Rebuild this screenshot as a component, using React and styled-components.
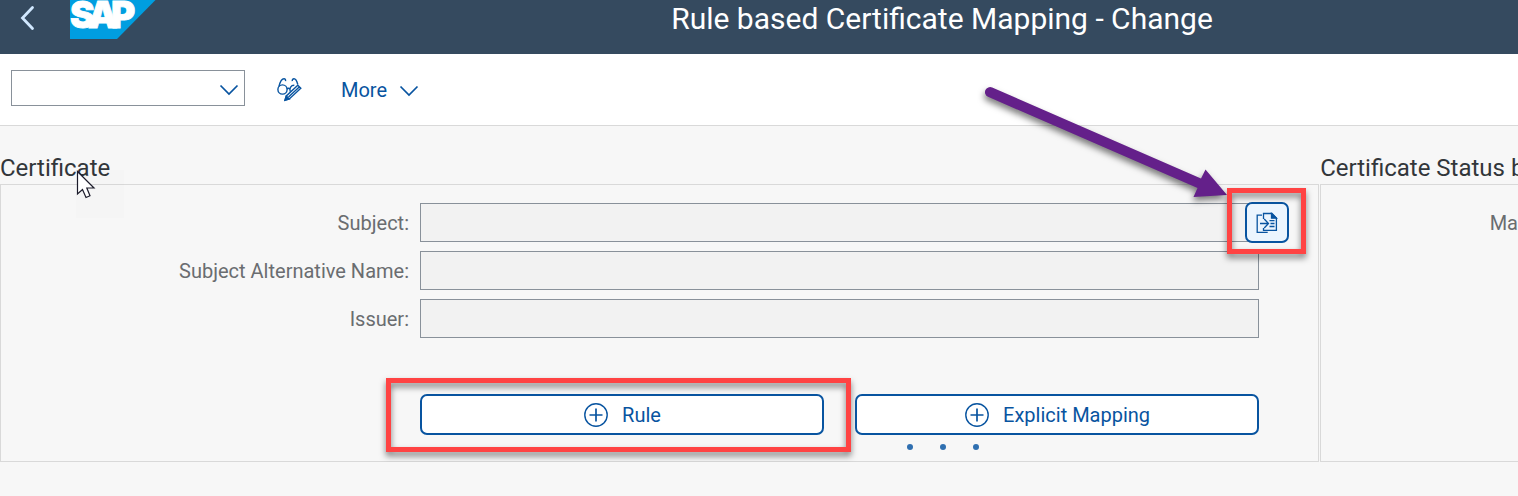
import React from "react";
import styled, { createGlobalStyle } from "styled-components";

const GlobalStyle = createGlobalStyle`
  *, *::before, *::after { box-sizing: border-box; }
  body {
    margin: 0;
    background: #f7f7f7;
    color: #32363a;
    font-family: Roboto, "Liberation Sans", sans-serif;
    font-size: 20px;
    line-height: 24px;
    overflow-x: hidden;
  }
  button, input, select { font: inherit; color: inherit; margin: 0; }
`;

const Page = styled.div`
  position: relative;
  overflow: hidden;
`;

const Header = styled.header`
  display: flex;
  height: 54px;
  background: #354a5f;
  color: #fff;
`;

const Brand = styled.div`
  flex: 0 0 366px;
  display: flex;
  align-items: flex-start;
`;

const BackButton = styled.button`
  width: 70px;
  height: 36px;
  padding: 0 0 0 20px;
  border: 0;
  background: none;
  text-align: left;

  svg { display: block; }
`;

const Title = styled.h1`
  flex: 1;
  margin: 0;
  font-size: 30px;
  line-height: 38px;
  font-weight: 400;
  text-align: center;
  white-space: nowrap;
`;

const Toolbar = styled.div`
  display: flex;
  align-items: center;
  height: 72px;
  padding: 0 11px;
  background: #fff;
  border-bottom: 1px solid #d9d9d9;
`;

const SelectBox = styled.div`
  display: grid;
  align-items: center;
  width: 234px;
  margin-bottom: 4px;

  > * { grid-area: 1 / 1; }
  > svg { justify-self: end; margin: 2px 6px 0 0; pointer-events: none; }
`;

const Select = styled.select`
  appearance: none;
  width: 100%;
  height: 36px;
  padding: 0 32px 0 8px;
  border: 1px solid #89919a;
  border-radius: 0;
  background: #fff;
`;

const ToolButton = styled.button`
  display: flex;
  align-items: center;
  gap: 12px;
  height: 36px;
  margin-left: ${(p) => p.$gap}px;
  padding: 0;
  border: 0;
  background: none;
  color: #0854a0;
`;

const Panels = styled.main`
  display: grid;
  grid-template-columns: minmax(0, 20fr) minmax(0, 3fr);
  gap: 1px;
  padding-top: 26px;
`;

const Section = styled.section`
  position: relative;
  display: flex;
  flex-direction: column;
  min-width: 0;
`;

const SectionTitle = styled.h2`
  margin: 0;
  font-size: 24px;
  line-height: 32px;
  font-weight: 400;
  white-space: nowrap;
`;

const Panel = styled.div`
  flex: 1;
  padding: 18px 59px 26px 0;
  border: 1px solid #d9d9d9;
  ${(p) => p.$open && "border-right: 0; padding-right: 0;"}
`;

const Fields = styled.div`
  display: grid;
  gap: 9px;
`;

const Row = styled.div`
  display: grid;
  grid-template-columns: 408px minmax(0, 1fr);
  column-gap: 11px;
  align-items: center;
`;

const Label = styled.label`
  color: #6a6d70;
  text-align: right;
  white-space: nowrap;
`;

const StatusLabel = styled(Label)`
  display: block;
  padding-top: 8px;
`;

const Control = styled.div`
  position: relative;
  display: flex;
`;

const TextInput = styled.input`
  width: 100%;
  height: 39px;
  padding: 0 8px;
  border: 1px solid #89919a;
  border-radius: 0;
  background: #f2f2f2;
`;

const PasteButton = styled.button`
  position: absolute;
  top: -1px;
  right: -30px;
  display: grid;
  place-items: center;
  width: 44px;
  height: 41px;
  padding: 0;
  border: 2px solid #0854a0;
  border-radius: 7px;
  background: #ebf5fe;
`;

const Actions = styled.div`
  display: grid;
  grid-template-columns: 1fr 1fr;
  gap: 31px;
  margin: 56px 0 0 419px;
`;

const ActionButton = styled.button`
  display: flex;
  flex: 1;
  align-items: center;
  justify-content: center;
  gap: 13px;
  height: 41px;
  padding: 0;
  border: 2px solid #0854a0;
  border-radius: 7px;
  background: #fff;
  color: #0854a0;
`;

const Highlight = styled.span`
  position: absolute;
  inset: ${(p) => p.$inset};
  border: 5px solid #ff4343;
  filter: drop-shadow(0 4px 3px rgba(0, 0, 0, 0.5));
  pointer-events: none;
`;

const Arrow = styled.svg`
  position: absolute;
  top: -123px;
  right: 19px;
  filter: drop-shadow(-1px 4px 3px rgba(0, 0, 0, 0.5));
  pointer-events: none;
`;

const BusyDots = styled.span`
  position: absolute;
  top: 50px;
  left: 52px;
  display: flex;
  gap: 27px;

  i {
    width: 6px;
    height: 6px;
    border-radius: 50%;
    background: #2f6fb0;
  }
`;

const Pointer = styled.div`
  position: absolute;
  top: 18px;
  left: 76px;
  width: 48px;
  height: 48px;
  background: rgba(0, 0, 0, 0.006);
  pointer-events: none;

  svg { display: block; }
`;

function Chevron() {
  return (
    <svg width="20" height="14" viewBox="0 0 20 14" fill="none" stroke="#0854a0" strokeWidth="1.7" aria-hidden="true">
      <path d="M1.5 3.5 10 12 18.5 3.5" />
    </svg>
  );
}

function SapLogo() {
  return (
    <svg width="86" height="39" viewBox="0 0 86 39" role="img" aria-label="SAP">
      <path d="M0 0H85.5L47 39H0Z" fill="#009ee0" />
      <text
        x="0 18 41"
        y="28"
        fill="#fff"
        stroke="#fff"
        strokeWidth="0.8"
        fontFamily="Inter, 'Liberation Sans', sans-serif"
        fontWeight="900"
        fontSize="37"
      >
        SAP
      </text>
    </svg>
  );
}

function DisplayChangeIcon() {
  return (
    <svg width="25" height="25" viewBox="0 0 25 25" fill="none" stroke="#0854a0" strokeWidth="1.4" aria-hidden="true">
      <circle cx="5.5" cy="12.5" r="4.6" />
      <path d="M2 9.5C2.800 6 4.500 1.800 7 1.800 8.200 1.800 8.800 2.800 8.500 4.200" />
      <path d="M10 12.200C10.800 11 12 11 12.900 12.200M13.200 14.500C12.200 11 14 8.200 17.300 8.300" />
      <path d="M15.300 4.200C15 2.800 15.800 1.800 17 1.800 19.200 1.800 20 4.500 20.800 7.500" />
      <path d="M8 23.300 9.300 19 20.800 8.200 23.800 11.200 12.300 22ZM11.500 20 22 10.200" />
      <path d="M8 23.300 9.300 19 12.300 22Z" fill="#0854a0" />
    </svg>
  );
}

function PasteIcon() {
  return (
    <svg width="22" height="22" viewBox="0 0 22 22" fill="none" stroke="#0854a0" strokeWidth="1.3" aria-hidden="true">
      <path d="M6 3.2H1.2V20.300H11.700" />
      <path d="M7.500 7V1.500H16L20.400 6V18.300H7.500V16" />
      <path d="M15.500 1.500V6.200H20.500Z" fill="#0854a0" />
      <path d="M4 11.500H12.500M8.200 7 12.500 11.500 8.200 16" />
      <path d="M13.500 8.700H18.500M14.500 11.500H18.500M13.500 14.500H18.500" />
    </svg>
  );
}

function AddIcon() {
  return (
    <svg width="26" height="26" viewBox="0 0 26 26" fill="none" stroke="#0854a0" aria-hidden="true">
      <circle cx="13" cy="13" r="11.2" strokeWidth="1.4" />
      <path d="M6.500 13H19.500M13 6.500V19.500" strokeWidth="1.7" />
    </svg>
  );
}

export default function App() {
  return (
    <Page>
      <GlobalStyle />
      <Header>
        <Brand>
          <BackButton aria-label="Back">
            <svg width="16" height="26" viewBox="0 0 16 26" fill="none" stroke="#d1e8ff" strokeWidth="2.8" strokeLinecap="round">
              <path d="M12.500 2.500 2.500 13 12.500 23.500" />
            </svg>
          </BackButton>
          <SapLogo />
        </Brand>
        <Title>Rule based Certificate Mapping - Change</Title>
      </Header>
      <Toolbar>
        <SelectBox>
          <Select aria-label="Command" defaultValue="">
            <option value="" />
          </Select>
          <Chevron />
        </SelectBox>
        <ToolButton $gap={32} aria-label="Display or change">
          <DisplayChangeIcon />
        </ToolButton>
        <ToolButton $gap={39}>
          More
          <Chevron />
        </ToolButton>
      </Toolbar>
      <Panels>
        <Section>
          <SectionTitle>Certificate</SectionTitle>
          <Panel>
            <Fields>
              <Row>
                <Label htmlFor="subject">Subject:</Label>
                <Control>
                  <TextInput id="subject" readOnly />
                  <PasteButton aria-label="Import certificate">
                    <PasteIcon />
                  </PasteButton>
                  <Arrow width="260" height="130" viewBox="0 0 260 130" aria-hidden="true">
                    <path
                      d="M12.200 7.500 221 98.500 225.500 89.500 247 115 213.500 117 217.500 108 8 16.800A5 5 0 0 1 12.200 7.500Z"
                      fill="#64208a"
                    />
                  </Arrow>
                  <Highlight $inset="-15px -47px -12px calc(100% - 32px)" />
                </Control>
              </Row>
              <Row>
                <Label htmlFor="alt-name">Subject Alternative Name:</Label>
                <TextInput id="alt-name" readOnly />
              </Row>
              <Row>
                <Label htmlFor="issuer">Issuer:</Label>
                <TextInput id="issuer" readOnly />
              </Row>
            </Fields>
            <Actions>
              <Control>
                <ActionButton>
                  <AddIcon />
                  Rule
                </ActionButton>
                <Highlight $inset="-16px -27px -17px -34px" />
              </Control>
              <Control>
                <ActionButton>
                  <AddIcon />
                  Explicit Mapping
                </ActionButton>
                <BusyDots>
                  <i />
                  <i />
                  <i />
                </BusyDots>
              </Control>
            </Actions>
          </Panel>
          <Pointer>
            <svg width="20" height="30" viewBox="0 0 20 30" aria-hidden="true">
              <path
                d="M1.500 1.500V24L6.500 19.500 10 27.500 14 25.800 10.800 18H18Z"
                fill="#fff"
                stroke="#1c1c2b"
                strokeWidth="1.2"
              />
            </svg>
          </Pointer>
        </Section>
        <Section>
          <SectionTitle>Certificate Status b</SectionTitle>
          <Panel $open>
            <StatusLabel as="span">Ma</StatusLabel>
          </Panel>
        </Section>
      </Panels>
    </Page>
  );
}
